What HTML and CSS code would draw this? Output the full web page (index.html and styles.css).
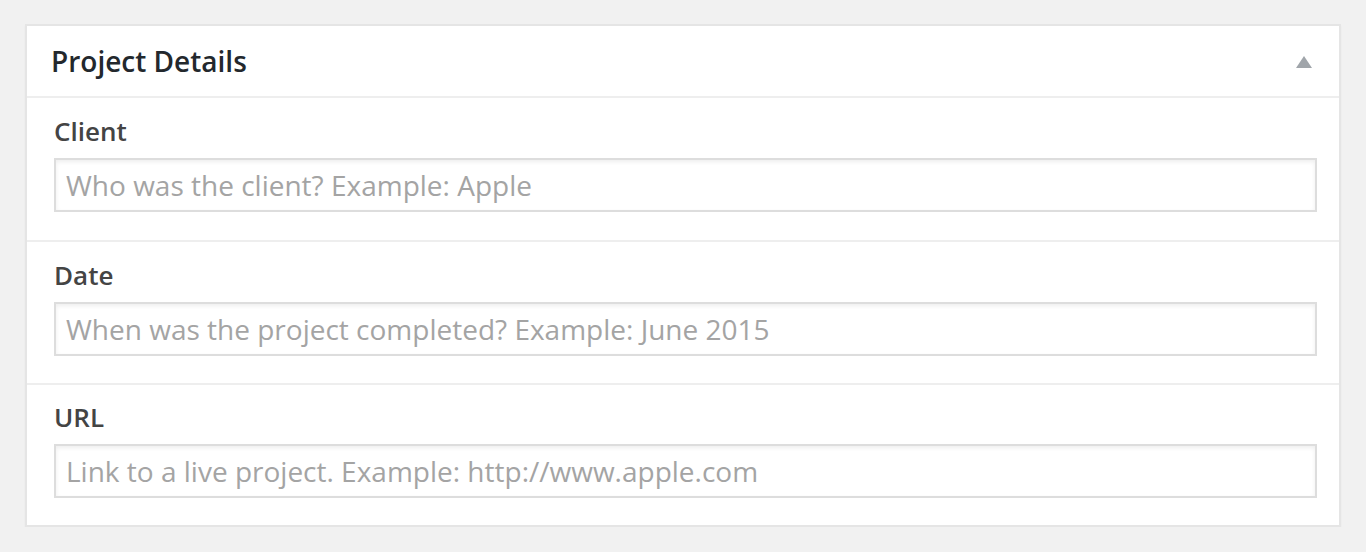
FILE: index.html
```html
<!DOCTYPE html>
<html>
<head>
<meta charset="utf-8">
<link rel="stylesheet" href="styles.css">
</head>
<body>
<div class="postbox">
  <div class="hndle">
    <h2 class="title">Project Details</h2>
    <span class="toggle" aria-hidden="true"></span>
  </div>
  <div class="field field-first">
    <label class="label">Client</label>
    <input class="input" type="text" placeholder="Who was the client? Example: Apple">
  </div>
  <div class="field">
    <label class="label">Date</label>
    <input class="input" type="text" placeholder="When was the project completed? Example: June 2015">
  </div>
  <div class="field field-last">
    <label class="label">URL</label>
    <input class="input" type="text" placeholder="Link to a live project. Example: http://www.apple.com">
  </div>
</div>
</body>
</html>
```
FILE: styles.css
```css
html, body {
  margin: 0;
  padding: 0;
  background: #f1f1f1;
  font-family: "Open Sans", "Noto Sans", sans-serif;
}
.postbox {
  margin: 24px 0 0 25px;
  width: 1312px;
  background: #fff;
  border: 2px solid #e5e5e5;
  box-shadow: 0 2px 2px rgba(0,0,0,0.04);
}
.hndle {
  height: 70px;
  display: flex;
  align-items: center;
  justify-content: space-between;
  padding: 0 27px 0 24px;
  border-bottom: 2px solid #eee;
}
.title {
  margin: 0;
  font-size: 28px;
  font-weight: 600;
  color: #23282d;
  line-height: 36px;
}
.toggle {
  width: 0;
  height: 0;
  border-left: 8px solid transparent;
  border-right: 8px solid transparent;
  border-bottom: 12px solid #a0a5aa;
  margin-top: 2px;
}
.field {
  display: flex;
  flex-direction: column;
  padding: 15px 22px 27px 27px;
  border-bottom: 2px solid #eee;
}
.field-first {
  padding-bottom: 28px;
}
.field-last {
  border-bottom: none;
  padding-top: 14px;
  padding-bottom: 27px;
}
.label {
  font-size: 26px;
  font-weight: 600;
  color: #444;
  line-height: 36px;
  margin-bottom: 9px;
}
.input {
  box-sizing: border-box;
  width: 100%;
  height: 54px;
  margin: 0;
  border: 2px solid #ddd;
  box-shadow: inset 0 2px 4px rgba(0,0,0,0.07);
  padding: 0 10px;
  font-family: "Open Sans", "Noto Sans", sans-serif;
  font-size: 28px;
  color: #32373c;
  background: #fff;
  outline: none;
}
.input::placeholder {
  color: #a4a4a4;
  opacity: 1;
}
```
